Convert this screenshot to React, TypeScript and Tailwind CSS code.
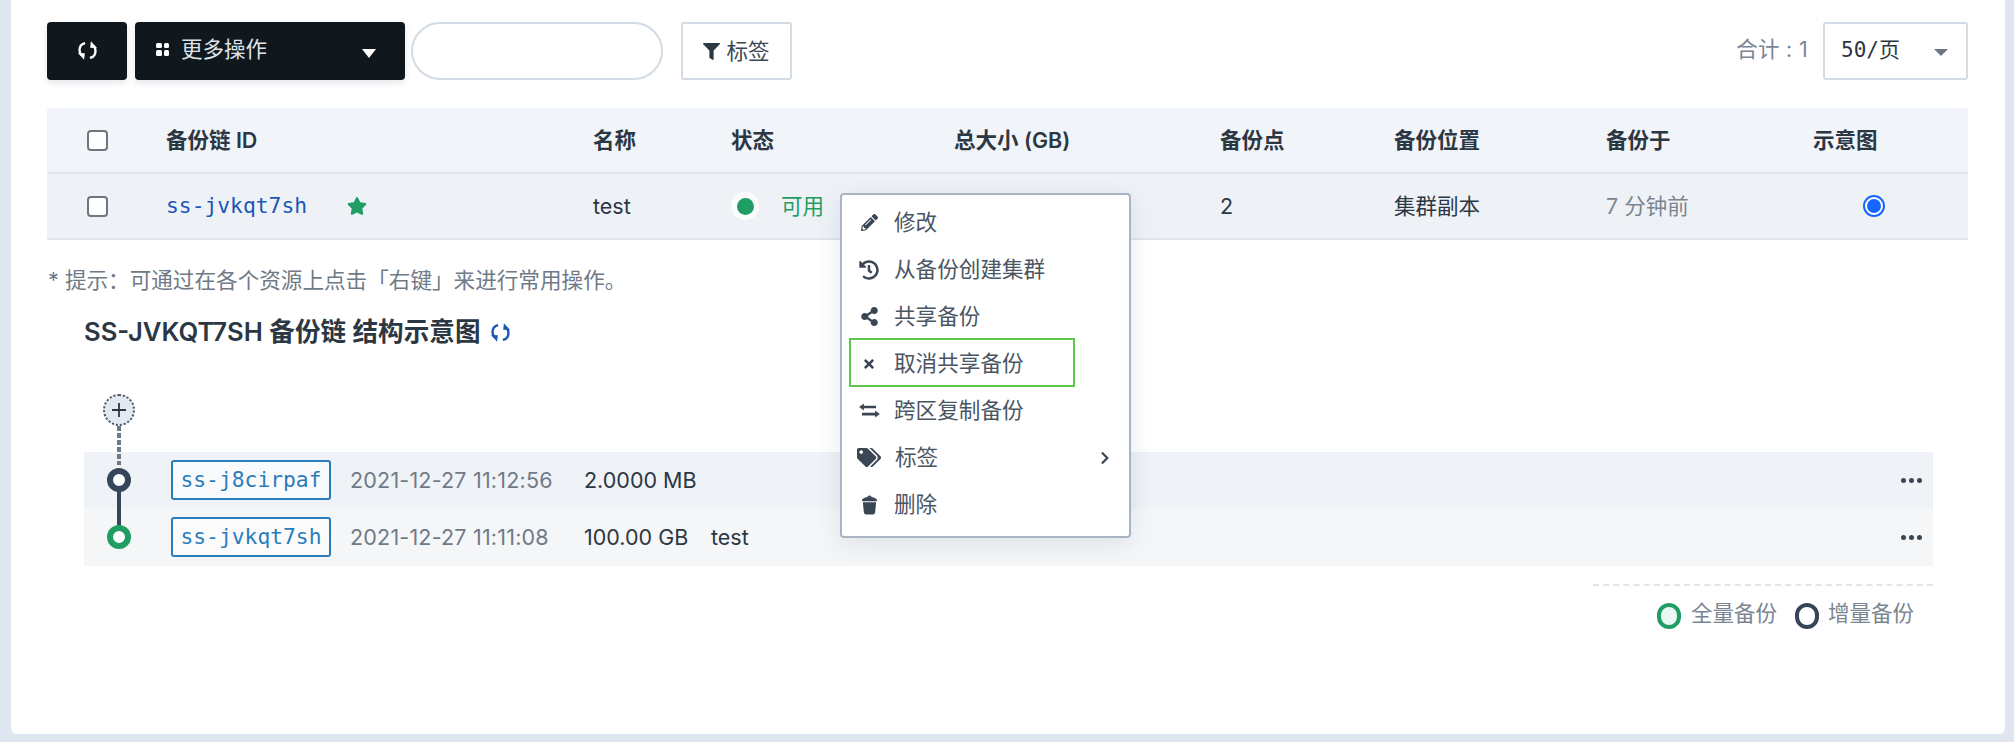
import React from "react";
import { FaPencilAlt, FaHistory, FaShareAlt, FaTimes, FaTags, FaFilter, FaStar, FaChevronRight } from "react-icons/fa";

const Refresh = ({ className = "" }: { className?: string }) => (
  <svg viewBox="0 0 20 20" className={className} fill="none" stroke="currentColor" strokeWidth="2.500">
    <path d="M7.500 2.200C3.900 3 1.600 6 1.600 9.600c0 1.900.6 3.600 1.800 5" />
    <path d="M12.500 17.800c3.600-.8 5.900-3.800 5.900-7.400 0-1.900-.6-3.600-1.800-5" />
    <path d="M0 12.600l7.200.4-.8 6.800z" fill="currentColor" stroke="none" />
    <path d="M20 7.400l-7.200-.4.800-6.800z" fill="currentColor" stroke="none" />
  </svg>
);

const Exchange = ({ className = "" }: { className?: string }) => (
  <svg viewBox="0 0 22 16" className={className} fill="currentColor">
    <path d="M5 .5v2.300h13v2.900H5V8L0 4.300z" />
    <path d="M17 8v2.300H3v2.900h14v2.300l5-3.700z" />
  </svg>
);

const Trash = ({ className = "" }: { className?: string }) => (
  <svg viewBox="0 0 18 20" className={className} fill="currentColor">
    <path d="M9 0c1 0 1.800.6 2.100 1.500C14.300 2 17 3.200 17 5.200c0 .5-.3.8-.8.8H1.800c-.5 0-.8-.3-.8-.8C1 3.200 3.700 2 6.900 1.500 7.200.6 8 0 9 0zm0 1.500c-.4 0-.7.1-.8.3h1.600c-.1-.2-.4-.3-.8-.3z" />
    <path d="M2 7.200h14l-1 10.600c-.1 1.300-1 2.200-2.300 2.200H5.300C4 20 3.100 19.100 3 17.800z" />
  </svg>
);

const Checkbox = () => (
  <div className="h-[21px] w-[21px] rounded-[4px] border-2 border-[#6f7680] bg-white" />
);

const headers = ["备份链 ID", "名称", "状态", "总大小 (GB)", "备份点", "备份位置", "备份于", "示意图"];
const cols = "grid grid-cols-[119px_427px_138px_223px_266px_174px_212px_207px_155px] items-center";

const menu = [
  { icon: <FaPencilAlt className="h-[17px] w-[17px]" />, label: "修改" },
  { icon: <FaHistory className="h-[20px] w-[20px]" />, label: "从备份创建集群" },
  { icon: <FaShareAlt className="h-[19px] w-[19px]" />, label: "共享备份" },
  { icon: <FaTimes className="h-[14px] w-[14px]" />, label: "取消共享备份" },
  { icon: <Exchange className="h-[15px] w-[21px]" />, label: "跨区复制备份" },
  { icon: <FaTags className="h-[21px] w-[24px]" />, label: "标签", arrow: true },
  { icon: <Trash className="h-[20px] w-[17px]" />, label: "删除" },
];

const chain = [
  { id: "ss-j8cirpaf", time: "2021-12-27 11:12:56", size: "2.0000 MB", name: "", bg: "bg-[#eff2f6]", ring: "border-[#37455a]" },
  { id: "ss-jvkqt7sh", time: "2021-12-27 11:11:08", size: "100.00 GB", name: "test", bg: "bg-[#f5f6f8]", ring: "border-[#1f9d63]" },
];

const mono = "[font-family:'DejaVu_Sans_Mono','Noto_Sans_CJK_SC',monospace]";

export default function App() {
  return (
    <div className="h-[742px] w-[2014px] overflow-hidden bg-[#dfe6ef] pl-[11px] text-[21.500px] text-[#2c3744] [font-family:Inter,'Noto_Sans_CJK_SC',sans-serif]">
      <div className="relative h-[734px] w-[1994px] rounded-b-[6px] bg-white pl-[36px] pr-[37px] pt-[22px]">
        {/* toolbar */}
        <div className="flex h-[58px] items-stretch">
          <button className="flex w-[80px] items-center justify-center rounded-[4px] bg-[#10171d] text-white shadow-[0_3px_6px_rgba(40,60,90,0.12)]">
            <Refresh className="h-[19px] w-[19px] -translate-y-[1px]" />
          </button>
          <button className="ml-[8px] flex w-[270px] items-center rounded-[4px] bg-[#10171d] pl-[21px] pr-[29px] text-[21.500px] text-[#dfe3e8] shadow-[0_3px_6px_rgba(40,60,90,0.12)]">
            <span className="grid h-[13px] w-[13px] -translate-y-[2px] grid-cols-2 gap-[2px]">
              <i className="rounded-[1.500px] bg-white" />
              <i className="rounded-[1.500px] bg-white" />
              <i className="rounded-[1.500px] bg-white" />
              <i className="rounded-[1.500px] bg-white" />
            </span>
            <span className="ml-[12px] -translate-y-[2px]">更多操作</span>
            <span className="ml-auto mt-[4px] h-0 w-0 border-x-[7px] border-t-[9px] border-x-transparent border-t-white" />
          </button>
          <div className="ml-[6px] w-[252px] rounded-full border-2 border-[#d3dbe4] bg-white" />
          <button className="ml-[18px] flex w-[111px] items-center justify-center gap-[6px] rounded-[3px] border-2 border-[#d3dbe4] bg-white text-[21.500px] text-[#3a4654]">
            <FaFilter className="h-[17px] w-[17px] text-[#2c3744]" />
            <span>标签</span>
          </button>
          <div className="ml-auto flex items-center pb-[4px] pr-[15px] text-[21.500px] tracking-[0.3px] text-[#7b8591]">合计 : 1</div>
          <div className={`flex w-[145px] items-center rounded-[3px] border-2 border-[#d3dbe4] bg-white pl-[16px] pr-[18px] text-[#2c3744] ${mono}`}>
            <span className="text-[21px]">50/页</span>
            <span className="ml-auto mt-[3px] h-0 w-0 border-x-[7px] border-t-[7px] border-x-transparent border-t-[#6c7683]" />
          </div>
        </div>

        {/* table */}
        <div className="mt-[28px] w-[1921px]">
          <div className={`${cols} h-[66px] rounded-t-[3px] border-b-2 border-[#e0e5eb] bg-[#f1f4f8] font-semibold`}>
            <div className="pl-[40px]"><Checkbox /></div>
            {headers.map((h) => (
              <div key={h} className="whitespace-nowrap">{h}</div>
            ))}
          </div>
          <div className={`${cols} h-[66px] border-b-2 border-[#e0e5eb] bg-[#eef2f7]`}>
            <div className="pl-[40px]"><Checkbox /></div>
            <div className="flex items-center">
              <span className={`text-[21.300px] text-[#1c56b8] ${mono}`}>ss-jvkqt7sh</span>
              <FaStar className="ml-[40px] h-[20px] w-[20px] text-[#1f9d63]" />
            </div>
            <div>test</div>
            <div className="flex items-center">
              <span className="flex h-[28px] w-[28px] items-center justify-center rounded-full bg-white/80">
                <span className="h-[17px] w-[17px] rounded-full bg-[#1f9d63]" />
              </span>
              <span className="ml-[22px] text-[#1f9d63]">可用</span>
            </div>
            <div />
            <div>2</div>
            <div>集群副本</div>
            <div className="text-[#7b8591]">7 分钟前</div>
            <div className="pl-[50px]">
              <span className="flex h-[22px] w-[22px] items-center justify-center rounded-full border-2 border-[#1565ff] bg-white">
                <span className="h-[14px] w-[14px] rounded-full bg-[#1565ff]" />
              </span>
            </div>
          </div>
        </div>

        {/* hint */}
        <p className="ml-[1px] mt-[25px] h-[30px] text-[21.600px] leading-[30px] text-[#6f7a87]">* 提示：可通过在各个资源上点击「右键」来进行常用操作。</p>

        {/* chain */}
        <div className="ml-[37px] w-[1849px]">
          <h2 className="mt-[20px] flex h-[34px] items-center text-[25.600px] font-semibold text-[#2c3744]">
            <span>SS-JVKQT7SH 备份链 结构示意图</span>
            <Refresh className="ml-[10px] h-[19px] w-[19px] text-[#1c56b8]" />
          </h2>

          <div className="relative z-10 ml-[19px] mt-[45px] h-[32px] w-[32px] rounded-full border-2 border-dotted border-[#4a5563] bg-[#e3e9f0]">
            <svg viewBox="0 0 14 14" className="absolute left-[7px] top-[7px] h-[14px] w-[14px]" stroke="#2c3744" strokeWidth="1.800"><path d="M7 0v14M0 7h14" /></svg>
            <span className="absolute left-[12px] top-[30px] h-[39px] w-[4px] bg-[repeating-linear-gradient(to_bottom,#6f7a87_0,#6f7a87_5px,transparent_5px,transparent_7px)]" />
          </div>

          <div className="mt-[26px]">
            {chain.map((r, i) => (
              <div key={r.id} className={`relative flex h-[57px] items-center ${r.bg}`}>
                {i === 0 && <span className="absolute left-[33px] top-[27px] z-10 h-[58px] w-[4px] bg-[#37455a]" />}
                <span className={`relative z-20 ml-[23px] h-[24px] w-[24px] -translate-y-[1px] rounded-full border-[6px] bg-white ${r.ring}`} />
                <span className={`ml-[40px] flex h-[40px] w-[160px] -translate-y-[1px] items-center justify-center rounded-[3px] border-2 border-[#2a7dbd] bg-white/60 text-[21.300px] text-[#2a7dbd] ${mono}`}>{r.id}</span>
                <span className="ml-[19px] w-[234px] whitespace-nowrap text-[21.500px] tracking-[0.2px] text-[#6f7a87]">{r.time}</span>
                <span className="w-[127px] whitespace-nowrap">{r.size}</span>
                <span>{r.name}</span>
                <span className="ml-auto mr-[11px] flex gap-[3px]">
                  <i className="h-[5px] w-[5px] rounded-full bg-[#3a4654]" />
                  <i className="h-[5px] w-[5px] rounded-full bg-[#3a4654]" />
                  <i className="h-[5px] w-[5px] rounded-full bg-[#3a4654]" />
                </span>
              </div>
            ))}
          </div>

          <div className="ml-auto mt-[18px] w-[340px] border-t-2 border-dashed border-[#e2e5e9]" />
          <div className="mt-[14px] flex items-center justify-end pr-[19px] text-[21.500px] text-[#7b8591]">
            <span className="h-[26px] w-[24px] rounded-full border-[4px] border-[#1f9d63] bg-[#e9f8f3]" />
            <span className="ml-[10px] -translate-y-[3px]">全量备份</span>
            <span className="ml-[18px] h-[26px] w-[24px] rounded-full border-[4px] border-[#37455a] bg-white" />
            <span className="ml-[9px] -translate-y-[3px]">增量备份</span>
          </div>
        </div>

        {/* context menu */}
        <div className="absolute left-[829px] top-[193px] h-[345px] w-[291px] rounded-[4px] border-2 border-[#a9b5c2] bg-white pt-[4px] text-[21.600px] text-[#4a5563] shadow-[0_6px_24px_rgba(60,80,110,0.12)]">
          {menu.map((m) => (
            <div key={m.label} className="flex h-[47px] items-center">
              <span className="flex w-[52px] justify-center pl-[2px] text-[#3a4654]">{m.icon}</span>
              <span className={m.arrow ? "ml-[1px]" : ""}>{m.label}</span>
              {m.arrow && <FaChevronRight className="ml-auto mr-[17px] h-[14px] w-[14px] text-[#3a4654]" />}
            </div>
          ))}
          <div className="absolute left-[7px] top-[143px] h-[49px] w-[226px] border-2 border-[#5fc84a]" />
        </div>
      </div>
    </div>
  );
}
